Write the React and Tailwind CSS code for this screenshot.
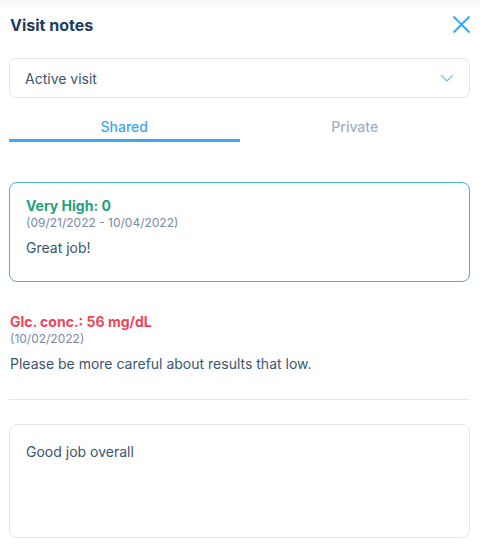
export default function App() {
  return (
    <div className="w-[480px] h-[554px] bg-white overflow-hidden font-['Inter',sans-serif] shadow-[inset_0_10px_10px_-8px_rgba(30,50,80,0.07)]">
      <div className="flex items-center justify-between pl-[10px] pr-[9px] pt-[14px]">
        <h1 className="text-[16px] leading-[22px] font-bold text-[#1d3d5e]">Visit notes</h1>
        <button className="text-[#3ea6f2] -mt-[2px]">
          <svg width="19" height="19" viewBox="0 0 19 19" fill="none" stroke="currentColor" strokeWidth="2">
            <path d="M1.5 1.5l16 16M17.5 1.5l-16 16" />
          </svg>
        </button>
      </div>

      <div className="ml-[9px] mr-[10px] mt-[22px] h-[40px] border border-[#dfe6ef] rounded-[7px] flex items-center justify-between pl-[15px] pr-[15px]">
        <span className="text-[14px] text-[#3b5571]">Active visit</span>
        <svg width="14" height="8" viewBox="0 0 14 8" fill="none" stroke="#7cc3f5" strokeWidth="1.3">
          <path d="M1 1l6 6 6-6" />
        </svg>
      </div>

      <div className="ml-[9px] mr-[10px] mt-[18px] grid grid-cols-2">
        <div className="text-center text-[14px] font-medium text-[#3ea6f2] pb-[2px] border-b-[3px] border-[#3ea6f2]">Shared</div>
        <div className="text-center text-[14px] font-medium text-[#a3adc4] pb-[2px]">Private</div>
      </div>

      <div className="ml-[9px] mr-[10px] mt-[40px] h-[100px] border border-[#4aa8f0] rounded-[8px] px-[16px] pt-[14px]">
        <div className="text-[14px] leading-[18px] font-bold text-[#1ea27d]">Very High: 0</div>
        <div className="text-[12px] leading-[15px] text-[#7b88a8]">(09/21/2022 - 10/04/2022)</div>
        <div className="mt-[7px] text-[14px] text-[#3b5571]">Great job!</div>
      </div>

      <div className="mx-[10px] mt-[31px]">
        <div className="text-[14px] leading-[18px] font-bold text-[#f0435a]">Glc. conc.: 56 mg/dL</div>
        <div className="text-[12px] leading-[15px] text-[#7b88a8]">(10/02/2022)</div>
        <div className="mt-[7px] text-[14px] text-[#3b5571]">Please be more careful about results that low.</div>
      </div>

      <div className="ml-[9px] mr-[10px] mt-[25px] border-t border-[#e3e8ef]" />

      <div className="ml-[9px] mr-[10px] mt-[24px] h-[114px] border border-[#dfe6ef] rounded-[8px] px-[16px] pt-[16px]">
        <div className="text-[14px] text-[#3b5571]">Good job overall</div>
      </div>
    </div>
  )
}
